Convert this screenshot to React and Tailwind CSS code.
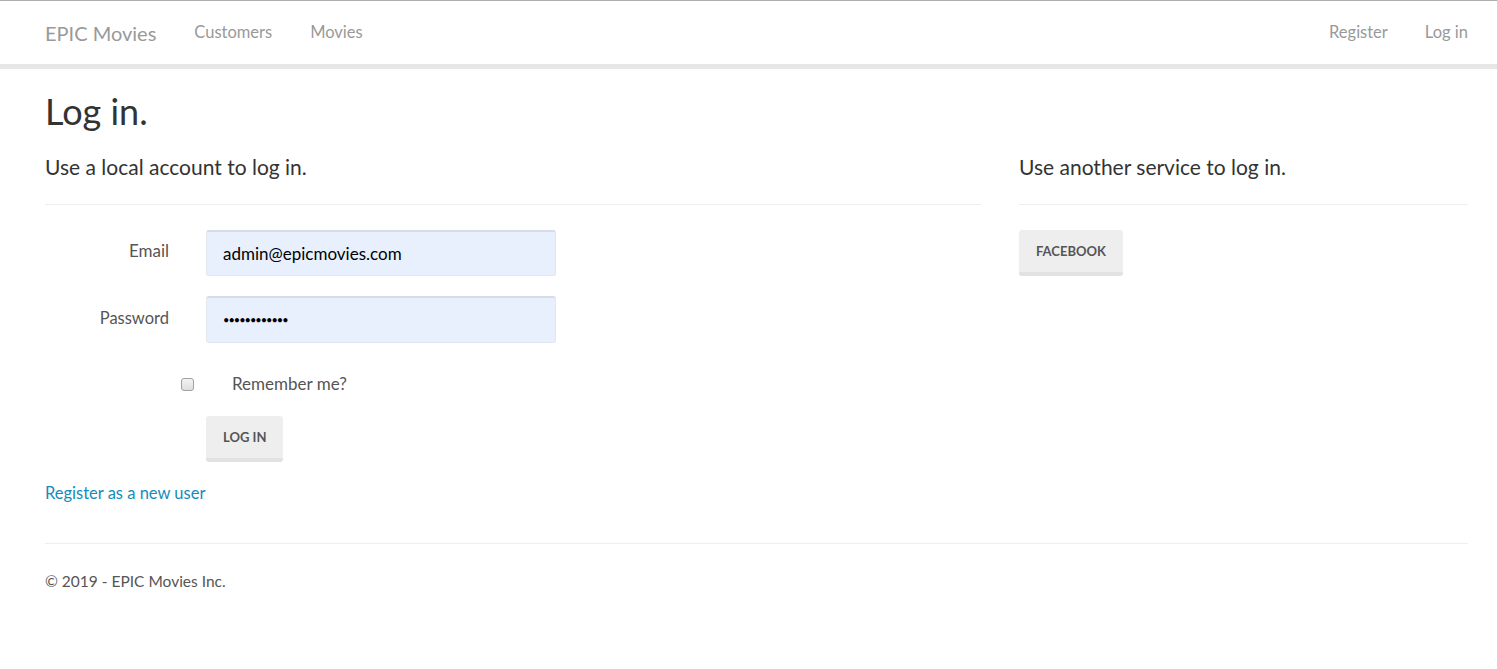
export default function App() {
  return (
    <div className="min-h-screen bg-white font-['Lato','Open_Sans',sans-serif] text-[#555]">
      {/* navbar */}
      <nav className="h-[69px] border-t border-t-[#adadad] border-b-[5px] border-b-[#e7e7e7]">
        <div className="flex h-[63px] items-center px-[45px] pr-[29px]">
          <a className="text-[20px] text-[#999]">EPIC Movies</a>
          <a className="ml-[38px] text-[16.5px] text-[#999]">Customers</a>
          <a className="ml-[38px] text-[16.5px] text-[#999]">Movies</a>
          <div className="ml-auto flex items-center gap-[37px]">
            <a className="text-[16.5px] text-[#999]">Register</a>
            <a className="text-[16.5px] text-[#999]">Log in</a>
          </div>
        </div>
      </nav>

      <main className="ml-[45px] w-[1423px]">
        <h1 className="mt-[21px] h-[42px] text-[36px] leading-[42px] text-[#333]">Log in.</h1>

        <div className="flex gap-[38px]">
          {/* local account */}
          <section className="w-[936px]">
            <h4 className="mt-[23px] h-[24px] text-[21px] leading-[24px] text-[#333]">
              Use a local account to log in.
            </h4>
            <hr className="mt-[25px] border-t border-[#eee]" />
            <form className="mt-[25px]">
              <div className="flex items-center">
                <label className="-mt-[4px] w-[124px] text-right text-[17px] leading-[22px]">Email</label>
                <div className="ml-[37px] flex h-[46px] w-[350px] items-center rounded-[3px] border border-[#e2e6ee] border-t-2 border-t-[#d6dbe4] bg-[#e8f0fe] pl-[16px] text-[17px] text-black">
                  admin@epicmovies.com
                </div>
              </div>
              <div className="mt-[20px] flex items-center">
                <label className="-mt-[4px] w-[124px] text-right text-[16.5px] leading-[22px]">Password</label>
                <div className="ml-[37px] flex h-[47px] w-[350px] items-center rounded-[3px] border border-[#e2e6ee] border-t-2 border-t-[#d6dbe4] bg-[#e8f0fe] pl-[16px] text-[11px] tracking-[-1px] text-black">
                  ••••••••••••
                </div>
              </div>
              <div className="mt-[29px] flex h-[24px] items-center">
                <span className="ml-[136px] h-[13px] w-[13px] rounded-[3px] border border-[#a0a0a0] bg-gradient-to-b from-[#f4f4f4] to-[#dedede]" />
                <span className="ml-[38px] text-[17px]">Remember me?</span>
              </div>
              <button
                type="button"
                className="mt-[20px] ml-[161px] h-[46px] rounded-[3px] border-b-4 border-[#e2e2e2] bg-[#eee] px-[17px] pt-[2px] text-[13px] font-bold uppercase text-[#555]"
              >
                Log in
              </button>
            </form>
            <a className="mt-[20px] block text-[16.5px] leading-[22px] text-[#158cba]">Register as a new user</a>
          </section>

          {/* external */}
          <section className="w-[449px]">
            <h4 className="mt-[23px] h-[24px] text-[21px] leading-[24px] text-[#333]">
              Use another service to log in.
            </h4>
            <hr className="mt-[25px] border-t border-[#eee]" />
            <button
              type="button"
              className="mt-[25px] h-[46px] rounded-[3px] border-b-4 border-[#e2e2e2] bg-[#eee] px-[17px] pt-[2px] text-[13px] font-bold uppercase text-[#555]"
            >
              Facebook
            </button>
          </section>
        </div>

        <hr className="mt-[39px] border-t border-[#eee]" />
        <footer className="mt-[26px] text-[15.5px] leading-[22px]">© 2019 - EPIC Movies Inc.</footer>
      </main>
    </div>
  );
}
